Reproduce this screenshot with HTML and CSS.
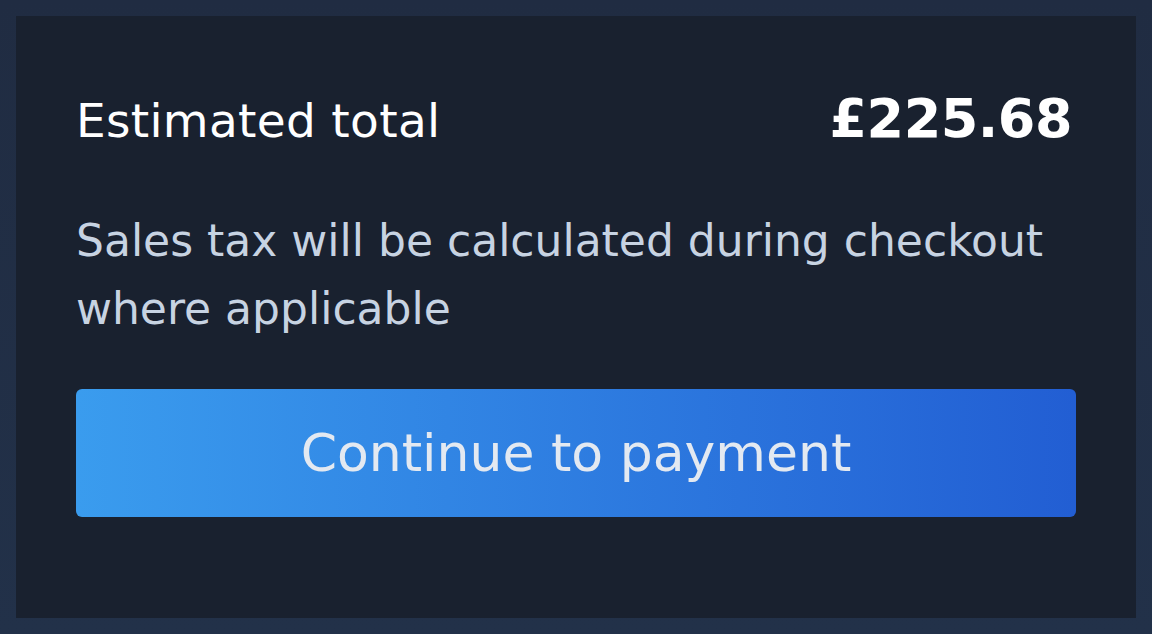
FILE: index.html
```html
<!DOCTYPE html>
<html lang="en">
<head>
    <meta charset="UTF-8">
    <meta name="viewport" content="width=device-width, initial-scale=1.0">
    <title>Cart Summary</title>
    <link rel="stylesheet" href="styles.css">
</head>
<body>
    <div class="summary">
        <div class="total-row">
            <div class="total-label">Estimated total</div>
            <div class="total-price">£225.68</div>
        </div>
        <p class="tax-note">Sales tax will be calculated during checkout where applicable</p>
        <button class="pay-button">Continue to payment</button>
    </div>
</body>
</html>
```

FILE: styles.css
```css
html, body {
    height: 100%;
}
body {
    margin: 0;
    padding: 16px;
    box-sizing: border-box;
    background: linear-gradient(to bottom, #202c42, #223149);
    font-family: 'DejaVu Sans', sans-serif;
}
.summary {
    height: 100%;
    box-sizing: border-box;
    background-color: #19212f;
    padding: 70px 60px 0 60px;
}
.total-row {
    display: flex;
    justify-content: space-between;
    align-items: baseline;
    line-height: 66px;
}
.total-label {
    color: #ffffff;
    font-size: 47px;
    letter-spacing: 0.3px;
}
.total-price {
    color: #ffffff;
    font-size: 54px;
    font-weight: bold;
    letter-spacing: -0.5px;
    margin-right: 4px;
}
.tax-note {
    margin: 53px 0 0 0;
    color: #c7d3e2;
    font-size: 44px;
    line-height: 68px;
}
.pay-button {
    display: block;
    width: 100%;
    height: 128px;
    margin-top: 46px;
    border: none;
    border-radius: 6px;
    background: linear-gradient(to right, #3a9cee, #225ed3);
    color: #e3e9f1;
    font-family: inherit;
    font-size: 52px;
    cursor: pointer;
}
```
